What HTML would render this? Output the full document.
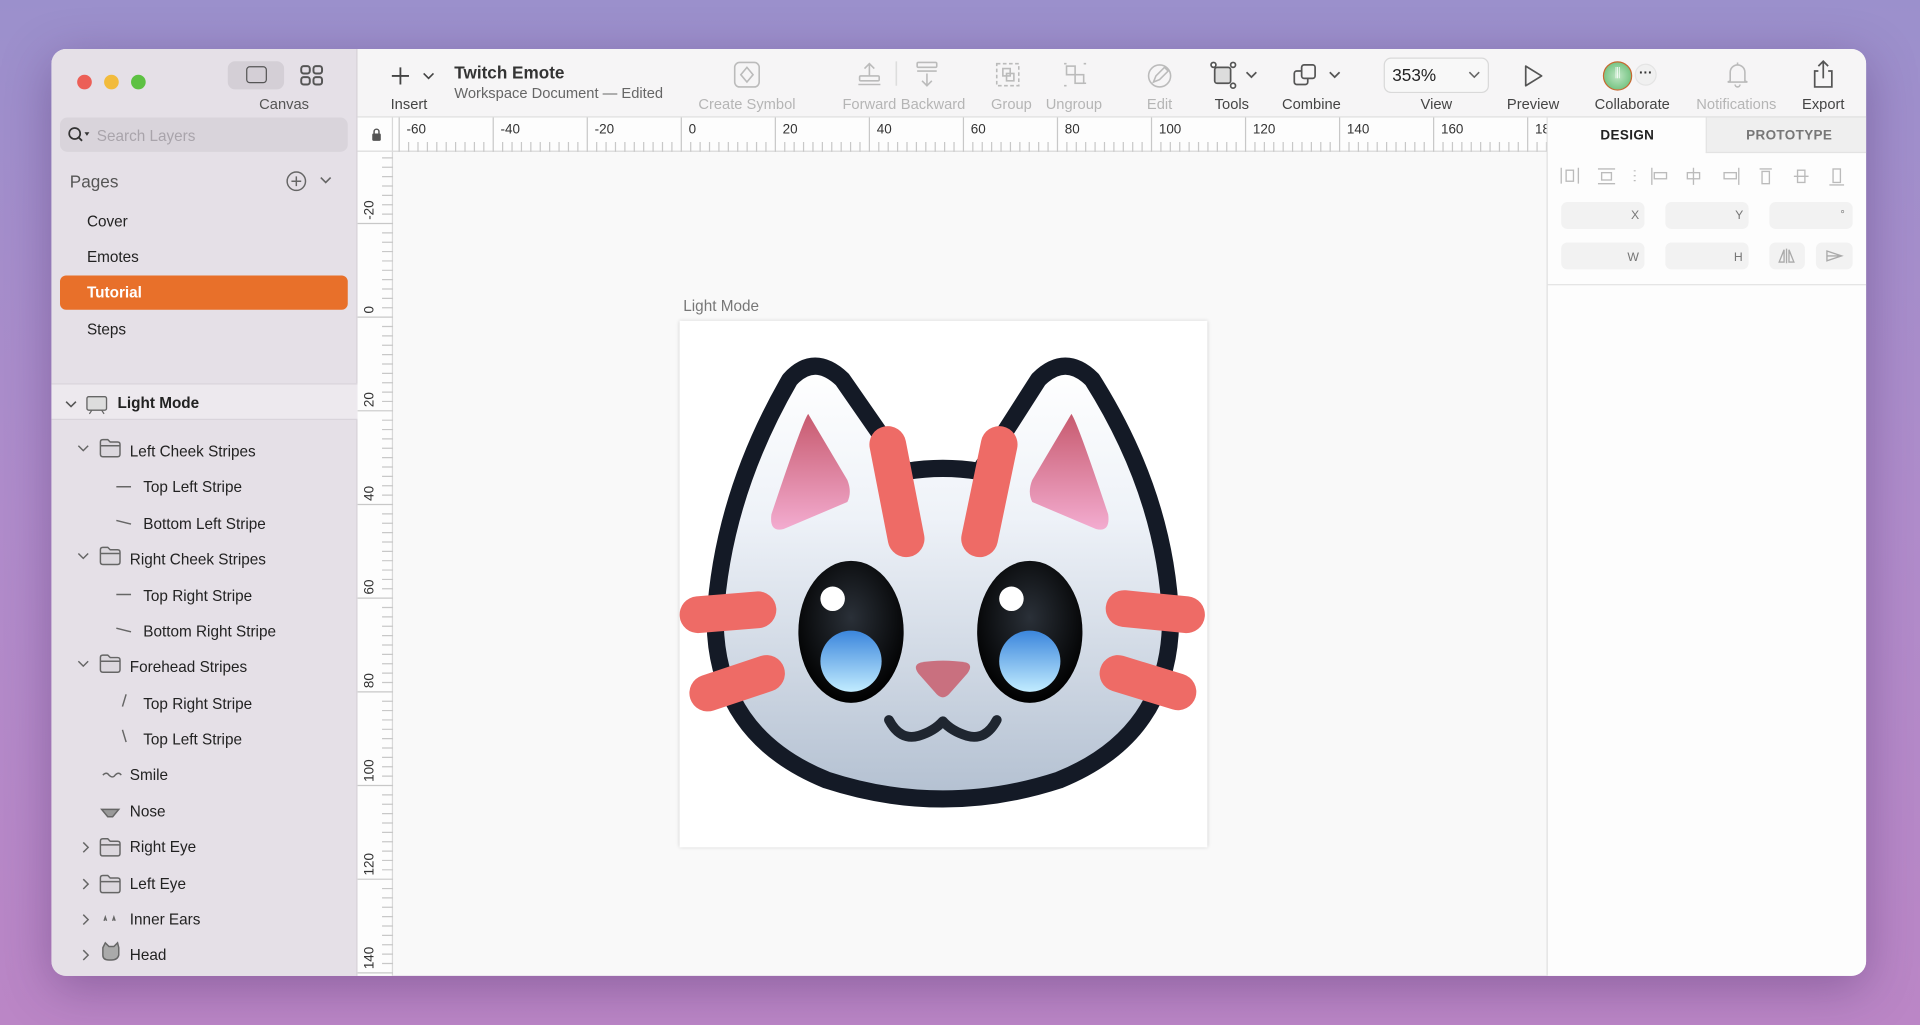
<!DOCTYPE html>
<html><head><meta charset="utf-8"><style>
*{margin:0;padding:0;box-sizing:border-box}
html,body{width:1920px;height:1025px;overflow:hidden}
body{background:linear-gradient(180deg,#9b90cc 0%,#b08ccb 50%,#bb86c6 100%);font-family:"Liberation Sans",sans-serif}
#s{position:absolute;left:0;top:0;width:1568px;height:837px;transform:scale(1.22449);transform-origin:0 0}
.a{position:absolute}
.win{left:42px;top:40px;width:1482px;height:757px;border-radius:12px;overflow:hidden;background:#f9f9f9;box-shadow:0 10px 40px rgba(60,30,90,.35)}
.t{position:absolute;white-space:nowrap;color:#222;font-size:12.5px;line-height:14px}
.lbl{position:absolute;white-space:nowrap;font-size:12px;color:#444;transform:translateX(-50%)}
.g{color:#b5b5b5}
</style></head><body><div id="s">
<div class="a win">
 <div class="a" style="left:0;top:0;width:250px;height:757px;background:#e5e0e7;border-right:1px solid #d6d1d8"></div>
 <div class="a" style="left:21px;top:21px;width:12px;height:12px;border-radius:6px;background:#ec5f57"></div>
 <div class="a" style="left:43px;top:21px;width:12px;height:12px;border-radius:6px;background:#f2bb3c"></div>
 <div class="a" style="left:65px;top:21px;width:12px;height:12px;border-radius:6px;background:#5dc143"></div>
 <div class="a" style="left:144px;top:10px;width:46px;height:23px;border-radius:6px;background:#d4cfd6"></div>
 <div class="a" style="left:159px;top:14px;width:17px;height:14px;border:1.6px solid #555;border-radius:3px"></div>
 <svg class="a" style="left:203px;top:13px" width="20" height="18"><g fill="none" stroke="#555" stroke-width="1.6"><rect x="1" y="1" width="7" height="6" rx="2"/><rect x="11" y="1" width="7" height="6" rx="2"/><rect x="1" y="10" width="7" height="6" rx="2"/><rect x="11" y="10" width="7" height="6" rx="2"/></g></svg>
 <div class="lbl" style="left:190px;top:38px;color:#555">Canvas</div>
 <div class="a" style="left:7px;top:56px;width:235px;height:28px;border-radius:6px;background:#d9d4db"></div>
 <svg class="a" style="left:13px;top:63px" width="20" height="14"><circle cx="6" cy="6" r="4.5" fill="none" stroke="#333" stroke-width="1.4"/><line x1="9" y1="9" x2="12" y2="12" stroke="#333" stroke-width="1.5"/><path d="M14 5h4l-2 3z" fill="#333"/></svg>
 <div class="t" style="left:37px;top:64px;color:#a9a4ab;font-size:12.5px">Search Layers</div>
 <div class="t" style="left:15px;top:101px;font-size:14px;color:#555">Pages</div>
 <svg class="a" style="left:191px;top:99px" width="40" height="18"><circle cx="9" cy="9" r="7.5" fill="none" stroke="#666" stroke-width="1.2"/><path d="M9 5v8M5 9h8" stroke="#666" stroke-width="1.2"/><path d="M29 6l4 4 4-4" fill="none" stroke="#666" stroke-width="1.3"/></svg>
 <div class="t" style="left:29px;top:134px">Cover</div>
 <div class="t" style="left:29px;top:163px">Emotes</div>
 <div class="a" style="left:7px;top:185px;width:235px;height:28px;border-radius:5px;background:#e8702a"></div>
 <div class="t" style="left:29px;top:192px;color:#fff;font-weight:bold">Tutorial</div>
 <div class="t" style="left:29px;top:222px">Steps</div>
 <div class="a" style="left:0;top:273px;width:250px;height:30px;background:#ede9ee;border-top:1px solid #d9d4db;border-bottom:1px solid #d9d4db"></div>
 <svg class="a" style="left:10px;top:283px" width="50" height="16"><path d="M2 5l4 4 4-4" fill="none" stroke="#555" stroke-width="1.3"/><rect x="19" y="1" width="16" height="11" rx="1.5" fill="#ddd" stroke="#666" stroke-width="1.1"/><path d="M23 12l-2 3M31 12l2 3" stroke="#666"/></svg>
 <div class="t" style="left:54px;top:282px;font-weight:bold">Light Mode</div>
 <svg class="a" style="left:0;top:310px" width="80" height="450" fill="none" stroke="#666" stroke-width="1.2">
  <g id="fo"><path d="M22 14l4 4 4-4"/><path d="M40 11q0-2 2-2h4l2 2h6q2 0 2 2v8q0 2-2 2H42q-2 0-2-2z" fill="#dcd8de"/><path d="M40 14h16"/></g>
  <path d="M53 47.5h12M53 75l12 3"/>
  <use href="#fo" y="88"/>
  <path d="M53 135.5h12M53 163l12 3"/>
  <use href="#fo" y="176"/>
  <path d="M61 217l-3 10M58 246l3 10"/>
  <path d="M42 283q3-3 5 0q3 3 5 0q3-3 5 0"/>
  <path d="M41 311h14l-5 6h-4z" fill="#999"/>
  <g id="fc"><path d="M26 338l4 4-4 4"/><path d="M40 337q0-2 2-2h4l2 2h6q2 0 2 2v8q0 2-2 2H42q-2 0-2-2z" fill="#dcd8de"/><path d="M40 340h16"/></g>
  <use href="#fc" y="30"/>
  <path d="M26 397l4 4-4 4"/><path d="M43 402l1-3 1 3M50 402l1-3 1 3"/>
  <path d="M26 426l4 4-4 4"/><path d="M42 424l2-4 3 3h4l3-3 1 4v6q-1 4-6 4h-2q-5 0-5-4z" fill="#aaa"/>
 </svg>
 <div class="t" style="left:64px;top:322px">Left Cheek Stripes</div>
 <div class="t" style="left:75px;top:351px">Top Left Stripe</div>
 <div class="t" style="left:75px;top:381px">Bottom Left Stripe</div>
 <div class="t" style="left:64px;top:410px">Right Cheek Stripes</div>
 <div class="t" style="left:75px;top:440px">Top Right Stripe</div>
 <div class="t" style="left:75px;top:469px">Bottom Right Stripe</div>
 <div class="t" style="left:64px;top:498px">Forehead Stripes</div>
 <div class="t" style="left:75px;top:528px">Top Right Stripe</div>
 <div class="t" style="left:75px;top:557px">Top Left Stripe</div>
 <div class="t" style="left:64px;top:586px">Smile</div>
 <div class="t" style="left:64px;top:616px">Nose</div>
 <div class="t" style="left:64px;top:645px">Right Eye</div>
 <div class="t" style="left:64px;top:675px">Left Eye</div>
 <div class="t" style="left:64px;top:704px">Inner Ears</div>
 <div class="t" style="left:64px;top:733px">Head</div>

 <div class="a" style="left:250px;top:0;width:1232px;height:56px;background:#f6f5f6;border-bottom:1px solid #dedede"></div>
 <svg class="a" style="left:276px;top:13px" width="40" height="18"><path d="M9 2v14M2 9h14" stroke="#444" stroke-width="1.5"/><path d="M28 7l4 4 4-4" fill="none" stroke="#444" stroke-width="1.3"/></svg>
 <div class="lbl" style="left:292px;top:38px">Insert</div>
 <div class="t" style="left:329px;top:12px;font-weight:bold;font-size:14px;color:#333">Twitch Emote</div>
 <div class="t" style="left:329px;top:29px;font-size:12px;color:#666">Workspace Document — Edited</div>
 <svg class="a" style="left:555px;top:10px" width="26" height="22" fill="none" stroke="#bbb" stroke-width="1.3"><rect x="3" y="1" width="20" height="20" rx="4"/><path d="M13 5l5 6-5 6-5-6z"/></svg>
 <div class="lbl g" style="left:568px;top:38px">Create Symbol</div>
 <svg class="a" style="left:656px;top:10px" width="140" height="24" fill="none" stroke="#bbb" stroke-width="1.3">
  <path d="M12 12V2M8 6l4-4 4 4"/><rect x="4" y="12" width="16" height="4" rx="1"/><path d="M3 19h18"/>
  <path d="M34 0v20" stroke="#ddd"/>
  <rect x="51" y="1" width="16" height="4" rx="1"/><path d="M51 8h16M59 10v10M55 16l4 4 4-4"/>
  <rect x="116" y="2" width="18" height="18" stroke-dasharray="3 2"/><rect x="121" y="6" width="6" height="6"/><rect x="124" y="10" width="6" height="6"/>
 </svg>
 <div class="lbl g" style="left:668px;top:38px">Forward</div>
 <div class="lbl g" style="left:720px;top:38px">Backward</div>
 <div class="lbl g" style="left:784px;top:38px">Group</div>
 <svg class="a" style="left:826px;top:11px" width="20" height="20" fill="none" stroke="#bbb" stroke-width="1.3"><rect x="3" y="3" width="7" height="7"/><rect x="10" y="10" width="7" height="7"/><path d="M1 1h2M17 17h2M1 19h2M17 1h2"/></svg>
 <div class="lbl g" style="left:835px;top:38px">Ungroup</div>
 <svg class="a" style="left:894px;top:11px" width="22" height="22" fill="none" stroke="#bbb" stroke-width="1.3"><circle cx="11" cy="11" r="9"/><path d="M6 16l2-5 7-7 3 3-7 7z"/></svg>
 <div class="lbl g" style="left:905px;top:38px">Edit</div>
 <svg class="a" style="left:946px;top:10px" width="40" height="24" fill="none" stroke="#555" stroke-width="1.4"><rect x="4" y="5" width="13" height="13" rx="2" fill="#ddd"/><circle cx="3" cy="3" r="2" fill="#fff"/><circle cx="19" cy="3" r="2" fill="#fff"/><circle cx="19" cy="20" r="2" fill="#fff"/><path d="M30 9l4 4 4-4"/></svg>
 <div class="lbl" style="left:964px;top:38px">Tools</div>
 <svg class="a" style="left:1012px;top:10px" width="42" height="24" fill="none" stroke="#555" stroke-width="1.4"><rect x="3" y="8" width="11" height="11" rx="2"/><rect x="9" y="3" width="11" height="11" rx="2" fill="#f6f5f6"/><path d="M32 9l4 4 4-4"/></svg>
 <div class="lbl" style="left:1029px;top:38px">Combine</div>
 <div class="a" style="left:1088px;top:7px;width:86px;height:29px;border:1px solid #d9d9d9;border-radius:6px;background:#f8f8f8"></div>
 <div class="t" style="left:1095px;top:14px;font-size:14px">353%</div>
 <svg class="a" style="left:1156px;top:17px" width="12" height="8"><path d="M2 2l4 4 4-4" fill="none" stroke="#666" stroke-width="1.3"/></svg>
 <div class="lbl" style="left:1131px;top:38px">View</div>
 <svg class="a" style="left:1200px;top:12px" width="20" height="20"><path d="M4 2l13 8-13 8z" fill="none" stroke="#555" stroke-width="1.4" stroke-linejoin="round"/></svg>
 <div class="lbl" style="left:1210px;top:38px">Preview</div>
 <div class="a" style="left:1293px;top:12px;width:18px;height:18px;border-radius:9px;background:#f0f0f0;border:1px solid #e4e4e4;font-size:11px;line-height:14px;text-align:center;color:#333;font-weight:bold">···</div>
 <div class="a" style="left:1267px;top:10px;width:24px;height:24px;border-radius:12px;border:1.8px solid #c86830;background:radial-gradient(circle,#bfe6c4,#5cb86c)"></div>
 <div class="a" style="left:1267px;top:16px;width:24px;height:10px;color:#fff;font-size:10px;text-align:center;line-height:10px">⫼</div>
 <div class="lbl" style="left:1291px;top:38px">Collaborate</div>
 <svg class="a" style="left:1367px;top:10px" width="20" height="22" fill="none" stroke="#bbb" stroke-width="1.3"><path d="M4 16V9a6 6 0 0 1 12 0v7l2 1H2z"/><path d="M8 19a2 2 0 0 0 4 0M10 1v2"/></svg>
 <div class="lbl g" style="left:1376px;top:38px">Notifications</div>
 <svg class="a" style="left:1437px;top:8px" width="20" height="26" fill="none" stroke="#555" stroke-width="1.4"><path d="M10 2v14M6 6l4-4 4 4M6 10H3v13h14V10h-3"/></svg>
 <div class="lbl" style="left:1447px;top:38px">Export</div>

 <div class="a" style="left:250px;top:56px;width:971px;height:28px;background:#fdfdfd;border-bottom:1px solid #d8d8d8"></div>
 <div class="a" style="left:250px;top:84px;width:29px;height:673px;background:#fdfdfd;border-right:1px solid #d8d8d8"></div>
 <div class="a" style="left:250px;top:56px;width:29px;height:28px;border-right:1px solid #d8d8d8"></div>
 <svg class="a" style="left:261px;top:64px" width="9" height="12"><rect x="1" y="5" width="7" height="6" rx="1" fill="#555"/><path d="M2.5 5V3.5a2 2 0 0 1 4 0V5" fill="none" stroke="#555" stroke-width="1.2"/></svg>
 <svg class="a" style="left:279px;top:56px" width="942" height="28" id="hr"></svg>
 <svg class="a" style="left:250px;top:84px" width="29" height="673" id="vr"></svg>

 <div class="a" style="left:1221px;top:56px;width:261px;height:701px;background:#fdfdfd;border-left:1px solid #e0e0e0"></div>
 <div class="a" style="left:1351px;top:56px;width:131px;height:29px;background:#efefef;border-left:1px solid #e3e3e3;border-bottom:1px solid #e3e3e3"></div>
 <div class="t" style="left:1265px;top:64px;font-size:11px;font-weight:bold;color:#222;letter-spacing:.3px">DESIGN</div>
 <div class="t" style="left:1384px;top:64px;font-size:11px;font-weight:bold;color:#777;letter-spacing:.3px">PROTOTYPE</div>
 <svg class="a" style="left:1232px;top:96px" width="240" height="16" fill="none" stroke="#bbb" stroke-width="1.1">
  <path d="M1 1v13M15 1v13"/><rect x="5" y="3" width="6" height="9"/>
  <path d="M31 2h14M31 14h14"/><rect x="34" y="5" width="8" height="6"/>
  <path d="M61 3v1M61 7v1M61 11v1" stroke-width="1.6"/>
  <path d="M75 1v14"/><rect x="77" y="5" width="10" height="5"/>
  <path d="M109 1v14"/><rect x="104" y="5" width="10" height="5"/>
  <path d="M146 1v14"/><rect x="134" y="5" width="10" height="5"/>
  <path d="M163 2h10"/><rect x="165" y="4" width="6" height="10"/>
  <path d="M191 8h12"/><rect x="194" y="3" width="6" height="10"/>
  <path d="M220 15h12"/><rect x="223" y="2" width="6" height="11"/>
 </svg>
 <div class="a" style="left:1233px;top:125px;width:68px;height:22px;border-radius:5px;background:#f2f2f2"></div>
 <div class="a" style="left:1318px;top:125px;width:68px;height:22px;border-radius:5px;background:#f2f2f2"></div>
 <div class="a" style="left:1403px;top:125px;width:68px;height:22px;border-radius:5px;background:#f2f2f2"></div>
 <div class="a" style="left:1233px;top:158px;width:68px;height:22px;border-radius:5px;background:#f2f2f2"></div>
 <div class="a" style="left:1318px;top:158px;width:68px;height:22px;border-radius:5px;background:#f2f2f2"></div>
 <div class="a" style="left:1403px;top:158px;width:29px;height:22px;border-radius:5px;background:#f2f2f2"></div>
 <div class="a" style="left:1441px;top:158px;width:30px;height:22px;border-radius:5px;background:#f2f2f2"></div>
 <div class="t" style="left:1290px;top:130px;font-size:10px;color:#777">X</div>
 <div class="t" style="left:1375px;top:130px;font-size:10px;color:#777">Y</div>
 <div class="t" style="left:1461px;top:128px;font-size:9px;color:#777">°</div>
 <div class="t" style="left:1287px;top:164px;font-size:10px;color:#777">W</div>
 <div class="t" style="left:1374px;top:164px;font-size:10px;color:#777">H</div>
 <svg class="a" style="left:1410px;top:162px" width="60" height="14" fill="none" stroke="#aaa" stroke-width="1.1"><path d="M7 1v12M5 2L1 12h4zM9 2l4 10H9z"/><path d="M40 3l12 4-12 4zM40 7h12"/></svg>
 <div class="a" style="left:1221px;top:192px;width:261px;height:1px;background:#e3e3e3"></div>

 <div class="t" style="left:516px;top:203px;font-size:12.5px;color:#777">Light Mode</div>
 <div class="a" style="left:513px;top:222px;width:431px;height:430px;background:#fff;box-shadow:0 0 3px rgba(0,0,0,.18)"></div>
 <svg class="a" style="left:513px;top:222px" width="431" height="430" viewBox="555 262 431 430">
  <defs>
   <linearGradient id="hg" x1="0" y1="0" x2="0" y2="1"><stop offset="0" stop-color="#ffffff"/><stop offset=".35" stop-color="#eef2f8"/><stop offset="1" stop-color="#b3c0d1"/></linearGradient>
   <linearGradient id="eg" x1="0" y1="0" x2="0" y2="1"><stop offset="0" stop-color="#c75a6e"/><stop offset="1" stop-color="#f3acd0"/></linearGradient>
   <linearGradient id="bg" x1="0" y1="0" x2="0" y2="1"><stop offset="0" stop-color="#3b86dc"/><stop offset="1" stop-color="#c2ecff"/></linearGradient>
   <radialGradient id="ey" cx=".5" cy=".4" r=".6"><stop offset="0" stop-color="#2a3038"/><stop offset="1" stop-color="#000"/></radialGradient>
  </defs>
  <path d="M645 310 Q 665 288 688 310 L 740 385 Q 770 380 800 385 L 848 310 Q 870 288 892 310 Q 952 405 956 505 Q 956 600 865 637 Q 770 668 675 637 Q 584 600 584 505 Q 590 405 645 310 Z" fill="url(#hg)" stroke="#141a26" stroke-width="14" stroke-linejoin="round"/>
  <path d="M660 338 Q 655 345 630 420 Q 628 435 640 432 L 692 410 Q 696 402 692 392 Z" fill="url(#eg)"/>
  <path d="M875 338 Q 880 345 905 420 Q 907 435 895 432 L 843 410 Q 839 402 843 392 Z" fill="url(#eg)"/>
  <g stroke="#ee6b66" stroke-width="30" stroke-linecap="round">
   <path d="M725 363L740 440M816 363L800 440"/>
   <path d="M570 502L619 498M578 566L626 550"/>
   <path d="M918 497L969 502M913 550L962 565"/>
  </g>
  <ellipse cx="695" cy="516" rx="43" ry="58" fill="url(#ey)"/>
  <ellipse cx="841" cy="516" rx="43" ry="58" fill="url(#ey)"/>
  <circle cx="695" cy="540" r="25" fill="url(#bg)"/>
  <circle cx="841" cy="540" r="25" fill="url(#bg)"/>
  <circle cx="680" cy="489" r="10" fill="#fff"/>
  <circle cx="826" cy="489" r="10" fill="#fff"/>
  <path d="M752 541 Q 770 538 789 541 Q 795 543 790 550 L 775 567 Q 770 572 765 567 L 750 550 Q 745 543 752 541Z" fill="#c9707f"/>
  <path d="M726 588 Q 735 605 750 601 Q 763 597 770 589 Q 777 597 790 601 Q 805 605 814 588" fill="none" stroke="#1f2630" stroke-width="8" stroke-linecap="round" stroke-linejoin="round"/>
 </svg>
</div>
</div>
<script>
(function(){
 var h=document.getElementById('hr'),v=document.getElementById('vr'),s='';
 for(var i=0;i<=125;i++){var x=5+i*7.68; if(x>942)break;var maj=(i%10===0); s+='<line x1="'+x+'" y1="'+(maj?0:20)+'" x2="'+x+'" y2="28" stroke="#c8c8c8" stroke-width="1"/>';}
 for(var k=0;k<13;k++){var lx=5+k*76.8+6;s+='<text x="'+lx+'" y="13" font-family="Liberation Sans" font-size="11" fill="#333">'+(-60+k*20)+'</text>';}
 h.innerHTML=s;s='';
 var base=135;
 for(var j=-20;j<80;j++){var y=base+j*7.65; if(y<0||y>673)continue;var m=(j%10===0); s+='<line x1="'+(m?0:20)+'" y1="'+y+'" x2="29" y2="'+y+'" stroke="#c8c8c8"/>';}
 for(var q=-1;q<8;q++){var yy=base+q*76.5-3;s+='<text transform="translate(13 '+yy+') rotate(-90)" font-family="Liberation Sans" font-size="11" fill="#333" text-anchor="start">'+(q*20)+'</text>';}
 v.innerHTML=s;
})();
</script>
</body></html>
